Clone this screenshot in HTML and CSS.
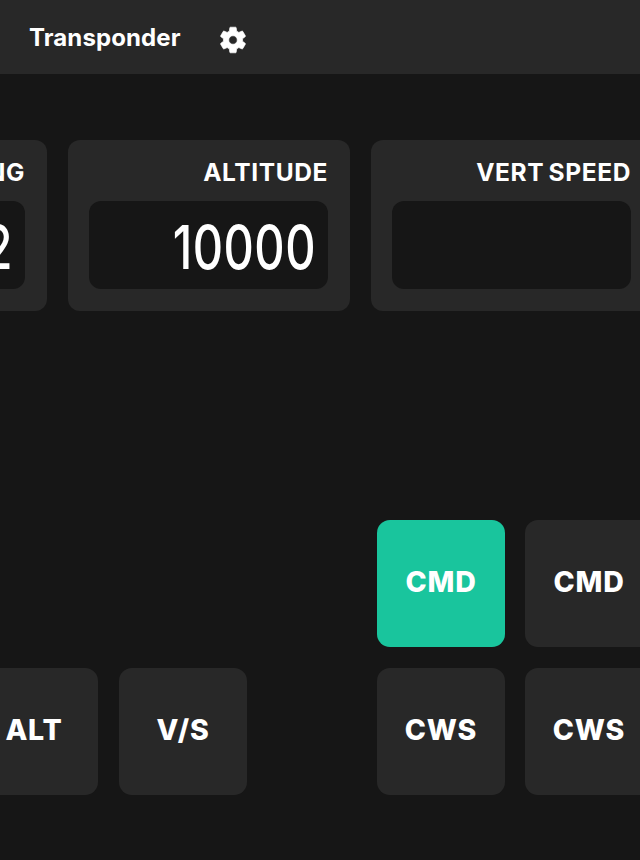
FILE: index.html
```html
<!DOCTYPE html>
<html lang="en">
<head>
<meta charset="utf-8">
<title>Transponder</title>
<link rel="stylesheet" href="styles.css">
</head>
<body>
<header class="topbar">
  <span class="topbar-title">Transponder</span>
  <svg class="gear" viewBox="0 0 24 24" aria-hidden="true"><path fill="#fff" stroke="#fff" stroke-width="0.5" fill-rule="evenodd" d="M19.14 12.94c.04-.3.06-.61.06-.94 0-.32-.02-.64-.07-.94l2.03-1.58c.18-.14.23-.41.12-.61l-1.92-3.32c-.12-.22-.37-.29-.59-.22l-2.39.96c-.5-.38-1.03-.7-1.62-.94l-.36-2.54c-.04-.24-.24-.41-.48-.41h-3.84c-.24 0-.43.17-.47.41l-.36 2.54c-.59.24-1.13.57-1.62.94l-2.39-.96c-.22-.08-.47 0-.59.22L2.74 8.87c-.12.21-.08.47.12.61l2.03 1.58c-.05.3-.09.63-.09.94s.02.64.07.94l-2.03 1.58c-.18.14-.23.41-.12.61l1.92 3.32c.12.22.37.29.59.22l2.39-.96c.5.38 1.03.7 1.62.94l.36 2.54c.05.24.24.41.48.41h3.84c.24 0 .44-.17.47-.41l.36-2.54c.59-.24 1.13-.56 1.62-.94l2.39.96c.22.08.47 0 .59-.22l1.92-3.32c.12-.22.07-.47-.12-.61l-2.01-1.58zM12 15.2a3.2 3.2 0 1 1 0-6.4 3.2 3.2 0 0 1 0 6.4z"/></svg>
</header>
<main class="content">
  <section class="panels">
    <div class="panel">
      <div class="panel-label">HEADING</div>
      <div class="readout"><span class="readout-value">002</span></div>
    </div>
    <div class="panel">
      <div class="panel-label">ALTITUDE</div>
      <div class="readout"><span class="readout-value">10000</span></div>
    </div>
    <div class="panel">
      <div class="panel-label">VERT SPEED</div>
      <div class="readout"></div>
    </div>
  </section>
  <section class="controls">
    <div class="button-grid modes">
      <button class="key">ALT</button>
      <button class="key">V/S</button>
    </div>
    <div class="button-grid autopilot">
      <button class="key key-on">CMD</button>
      <button class="key">CMD</button>
      <button class="key">CWS</button>
      <button class="key">CWS</button>
    </div>
  </section>
</main>
</body>
</html>
```
FILE: styles.css
```css
* { box-sizing: border-box; }
html, body { margin: 0; height: 100%; overflow: hidden; }
body {
  background: #161616;
  color: #fff;
  font-family: Inter, "Liberation Sans", sans-serif;
  width: 640px;
}
.topbar {
  height: 74px;
  background: #282828;
  display: flex;
  align-items: center;
  padding-left: 29px;
  gap: 37px;
}
.topbar-title {
  font-weight: 700;
  font-size: 24px;
  line-height: 1;
  flex: 0 0 152px;
  white-space: nowrap;
  letter-spacing: 0.1px;
  padding-top: 2px;
}
.gear { width: 32px; height: 32px; margin-top: 5px; margin-left: -1px; flex: none; }
.content { padding-top: 66px; }
.panels {
  display: flex;
  gap: 21px;
  margin-left: -235px;
  width: 888px;
}
.panel {
  flex: 0 0 282px;
  height: 170.5px;
  background: #282828;
  border-radius: 12px;
  padding: 20px 22px 21px 21px;
  display: flex;
  flex-direction: column;
}
.panel-label {
  font-weight: 700;
  font-size: 24.5px;
  line-height: 24px;
  text-align: right;
  letter-spacing: 0.6px;
  word-spacing: -2px;
  white-space: nowrap;
}
.readout {
  margin-top: 17px;
  height: 88px;
  background: #161616;
  border-radius: 12px;
  padding-right: 12px;
  display: flex;
  align-items: center;
  justify-content: flex-end;
  overflow: hidden;
}
.readout-value {
  font-weight: 500;
  font-size: 47px;
  line-height: 1;
  letter-spacing: 0.5px;
  transform: translateY(1px) scaleY(1.3);
}
.controls {
  display: flex;
  margin-left: -30px;
  margin-top: 209px;
}
.button-grid {
  display: grid;
  grid-template-columns: 128px 128px;
  grid-auto-rows: 127.6px;
  gap: 20.6px 20px;
}
.modes { margin-right: 130px; column-gap: 21px; align-self: flex-end; }
.key {
  border: 0;
  padding: 0 0 4px;
  background: #282828;
  color: #fff;
  border-radius: 13px;
  font-family: Inter, "Liberation Sans", sans-serif;
  font-weight: 800;
  font-size: 28.5px;
  letter-spacing: 0.8px;
}
.key-on { background: #19c59d; }
```
